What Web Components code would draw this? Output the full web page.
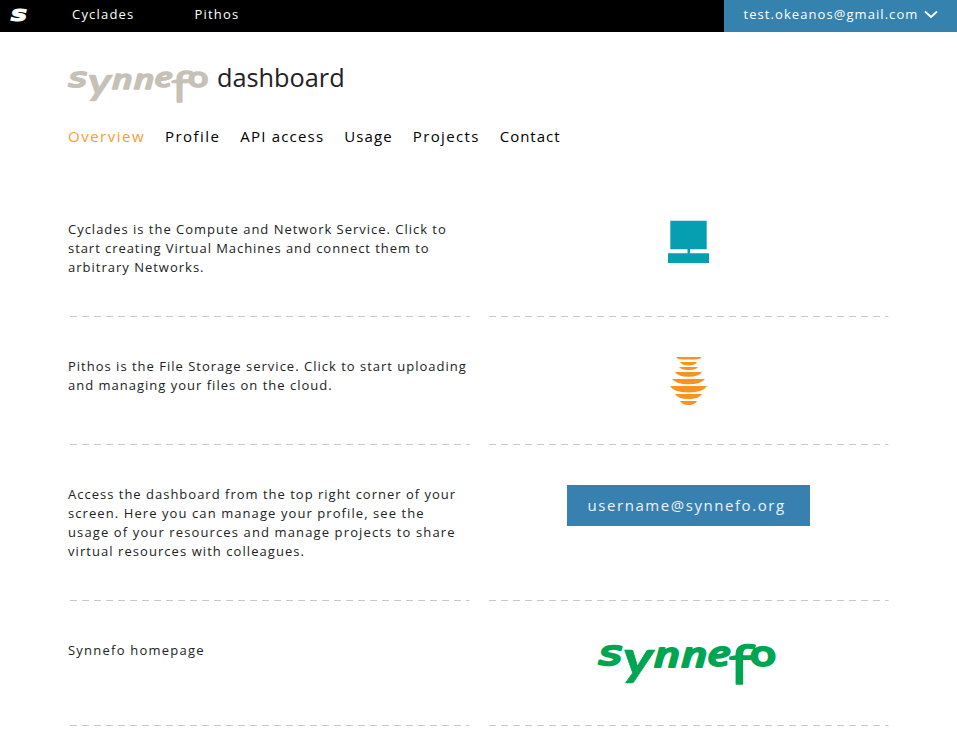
<!DOCTYPE html>
<html lang="en">
<head>
<meta charset="utf-8">
<title>synnefo dashboard</title>
<style>
body { margin: 0; background: #fff; color: #222; font: 13px/19px "Open Sans", sans-serif; letter-spacing: 1px; }
</style>
</head>
<body>
<dashboard-page></dashboard-page>
<script>
function define(name, html) {
  const template = document.createElement('template');
  template.innerHTML = html;
  customElements.define(name, class extends HTMLElement {
    constructor() {
      super();
      this.attachShadow({ mode: 'open' }).append(template.content.cloneNode(true));
    }
  });
}

define('synnefo-logo', `
<style>
:host { display: block; width: 180px; height: 48px; color: #00a551; }
svg { display: block; width: 100%; height: 100%; overflow: visible; }
text { font: italic 600 34px "Open Sans", sans-serif; fill: currentColor; stroke: currentColor; stroke-width: 1.8; stroke-linejoin: round; letter-spacing: 0; }
.s { font: italic 400 34px "DejaVu Sans", sans-serif; stroke-width: 2.6; }
.y { font: italic 700 48px Lato, sans-serif; stroke-width: .6; }
.f { font-size: 52px; font-style: normal; font-weight: 400; stroke-width: 1.6; }
.o { font-style: normal; }
</style>
<svg viewBox="0 0 180 48"><text transform="scale(1.3 1)" x="0.500 19 43 64 84 101 116.500" y="24 34 26 26 24.500 42.500 24.500"><tspan class="s">s</tspan><tspan class="y">y</tspan>nne<tspan class="f">f</tspan><tspan class="o">o</tspan></text></svg>`);

define('brand-mark', `
<style>
:host { display: block; width: 20px; height: 32px; }
svg { display: block; margin-left: -11px; overflow: visible; }
text { font: italic 700 22px "DejaVu Sans", sans-serif; fill: #fff; stroke: #fff; stroke-width: 1; letter-spacing: 0; }
</style>
<svg width="40" height="32"><text transform="scale(1.25 1)" x="8.700" y="21.200">s</text></svg>`);

define('top-bar', `
<style>
:host { display: flex; height: 32px; background: #000; color: #fff; line-height: 29px; }
brand-mark { margin: 0 41px 0 11px; }
nav { display: flex; gap: 60px; flex: 1; letter-spacing: 1.2px; }
</style>
<brand-mark></brand-mark><nav><slot></slot></nav><slot name="user"></slot>`);

define('user-menu', `
<style>
:host { display: flex; width: 233px; box-sizing: border-box; padding-left: 19.5px; background: #3582ae; color: #fff; letter-spacing: 1.07px; }
svg { margin: 10px 0 0 6px; }
</style>
<span><slot></slot></span><svg width="14" height="9" fill="none" stroke="#fff" stroke-width="1.8"><path d="M1 1.5 7 7l6-5.5"/></svg>`);

define('page-header', `
<style>
:host { display: flex; padding: 36px 0 0 68px; height: 51px; }
synnefo-logo { width: 142px; height: 38px; color: #c5c1b7; }
h1 { margin: -9px 0 0 7px; font-size: 25.3px; line-height: 36px; font-weight: 400; letter-spacing: 0; color: #222; }
</style>
<synnefo-logo></synnefo-logo><h1><slot></slot></h1>`);

define('tab-bar', `
<style>
:host { display: flex; gap: 20px; padding: 7px 0 0 68px; font-size: 15px; line-height: 20px; color: #000; }
::slotted(.active) { color: #f89c33; }
</style><slot></slot>`);

define('service-row', `
<style>
:host { display: grid; grid-template-columns: 402px 402px; gap: 17px; height: var(--h); margin-left: 68px; }
div { box-sizing: border-box; padding-top: var(--top, 40px); background: repeating-linear-gradient(90deg, #c8c8c8 0 7px, transparent 7px 12px) 2px 100% / 399.5px 1px no-repeat; }
.art { display: flex; justify-content: center; align-items: flex-start; padding-top: 40px; }
</style>
<div><slot></slot></div><div class="art"><slot name="art"></slot></div>`);

define('text-line', `<style>:host { display: block; white-space: nowrap; }</style><slot></slot>`);

define('cyclades-icon', `
<style>:host { display: block; margin-top: 1px } svg { display: block }</style>
<svg width="41" height="43" fill="#069fb2"><path d="M2.3.7h36.4v28.6H22v4h19V43H0v-9.7h19.5v-4H2.3z"/></svg>`);

define('pithos-icon', `
<style>:host { display: block; margin-top: -1px } svg { display: block }</style>
<svg width="37" height="50" fill="#f7931e"><path d="M6 1h25.500q-1 2.500-7.500 2.500H13.500Q7 3.500 6 1zM10 6h17q-2 3.500-8.500 3.500T10 6zM9 11h19q-2 3-9.500 3T9 11zM5 16h27q-2.500 4.800-13.500 4.800T5 16zM2 23h33q-4 5.300-16.500 5.300T2 23zM0 30h37q-4 6.500-18.500 6.500T0 30zM5 38h27q-2.500 5-13.500 5T5 38zM10 45h17q-2 4-8.500 4T10 45z"/></svg>`);

define('user-badge', `
<style>
:host { display: block; width: 243px; height: 41px; box-sizing: border-box; padding-left: 21px; background: #3880b0; color: #eaf4fa; font-size: 15px; line-height: 40px; letter-spacing: 1.56px; }
</style><slot></slot>`);

define('dashboard-page', `
<style>
:host { display: block; height: 753px; overflow: hidden; }
main { padding-top: 33px; }
</style>
<top-bar><span>Cyclades</span><span>Pithos</span><user-menu slot="user">test.okeanos@gmail.com</user-menu></top-bar>
<page-header>dashboard</page-header>
<tab-bar><span class="active" style="letter-spacing:1.5px">Overview</span><span style="letter-spacing:1.43px">Profile</span><span style="letter-spacing:1.2px">API access</span><span style="letter-spacing:1.1px">Usage</span><span style="letter-spacing:1.35px">Projects</span><span>Contact</span></tab-bar>
<main>
<service-row style="--h:138px;--top:41px"><text-line style="letter-spacing:.98px">Cyclades is the Compute and Network Service. Click to</text-line><text-line style="letter-spacing:.94px">start creating Virtual Machines and connect them to</text-line><text-line>arbitrary Networks.</text-line><cyclades-icon slot="art"></cyclades-icon></service-row>
<service-row style="--h:128px"><text-line>Pithos is the File Storage service. Click to start uploading</text-line><text-line>and managing your files on the cloud.</text-line><pithos-icon slot="art"></pithos-icon></service-row>
<service-row style="--h:156px"><text-line>Access the dashboard from the top right corner of your</text-line><text-line style="letter-spacing:1.08px">screen. Here you can manage your profile, see the</text-line><text-line style="letter-spacing:1.12px">usage of your resources and manage projects to share</text-line><text-line style="letter-spacing:1.06px">virtual resources with colleagues.</text-line><user-badge slot="art">username@synnefo.org</user-badge></service-row>
<service-row style="--h:125px"><text-line style="letter-spacing:1.23px">Synnefo homepage</text-line><synnefo-logo slot="art"></synnefo-logo></service-row>
</main>`);
</script>
</body>
</html>
